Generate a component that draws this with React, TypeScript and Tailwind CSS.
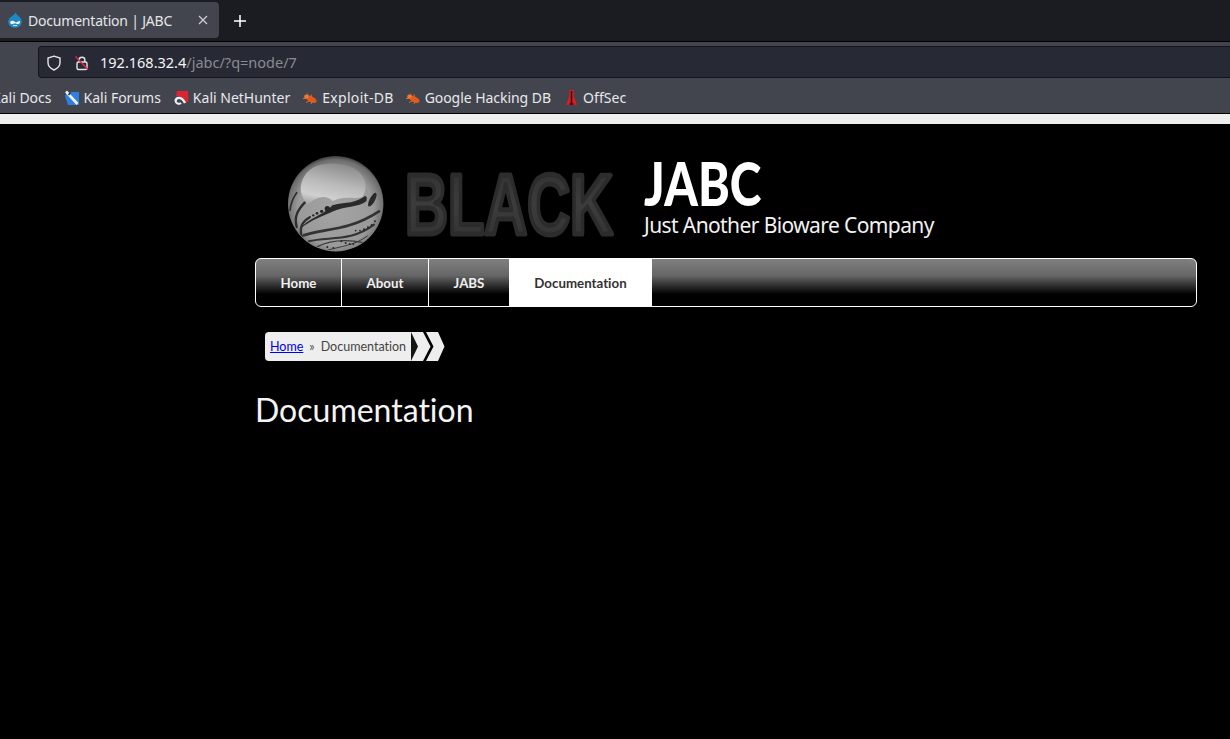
import React from "react";

const ui = { fontFamily: '"Noto Sans", "Open Sans", sans-serif' };
const page = { fontFamily: 'Lato, "Open Sans", sans-serif', fontVariantLigatures: "none" } as React.CSSProperties;
const head = { fontFamily: '"Noto Sans", "Open Sans", sans-serif' };
const jabc = { fontFamily: 'Lato, "Open Sans", sans-serif' };

function Drupal() {
  return (
    <svg width="16" height="16" viewBox="0 0 16 16">
      <path d="M8.5 0.3C9 3 14.8 5 14.8 9.7C14.8 13.2 11.6 15.7 8 15.7C4.4 15.7 1.2 13.2 1.2 9.7C1.2 5 7.5 3.5 8.5 0.3Z" fill="#1f87c4" />
      <path d="M3.3 9.6C5 8 7 9 8 10C9 11 11 9.6 12.7 8.8C13.6 10.5 12.6 12.2 11 12.2C9.6 12.2 9 11.2 8 11.2C7 11.2 6.2 12.2 4.7 12.2C3.4 12.2 2.9 10.6 3.3 9.6Z" fill="#f0f6fa" />
      <path d="M6 13.6H10" stroke="#dfeaf2" strokeWidth="1" />
    </svg>
  );
}

function Bug() {
  return (
    <svg width="16" height="16" viewBox="0 0 16 16">
      <ellipse cx="9.5" cy="9.5" rx="5.5" ry="2.8" fill="#e2591f" transform="rotate(24 9.5 9.5)" />
      <circle cx="4.4" cy="6.6" r="2.2" fill="#ee7b32" />
      <path d="M1 8.5L5 8.5M4 12.5L8 10.5M9 14L10 11M5 3.5L8 7M9 4.5L10 7.5" stroke="#e2691f" strokeWidth="1" fill="none" />
    </svg>
  );
}

function Bookmark({ icon, label, cls = "" }: { icon?: React.ReactNode; label: string; cls?: string }) {
  return (
    <div className="flex items-center gap-[4px] shrink-0">
      {icon}
      <span className={`text-[14px] text-[#e8e8ea] whitespace-nowrap leading-none ${cls}`}>{label}</span>
    </div>
  );
}

function Logo() {
  return (
    <svg width="336" height="100" viewBox="0 0 336 100" className="block">
      <defs>
        <radialGradient id="orb" cx="0.5" cy="0.55" r="0.55">
          <stop offset="0" stopColor="#a4a4a4" />
          <stop offset="0.72" stopColor="#9a9a9a" />
          <stop offset="0.93" stopColor="#6c6c6c" />
          <stop offset="1" stopColor="#3c3c3c" />
        </radialGradient>
        <linearGradient id="shine" x1="0.6" y1="0" x2="0.25" y2="1">
          <stop offset="0" stopColor="#8c8c8c" />
          <stop offset="0.45" stopColor="#b8b8b8" />
          <stop offset="0.8" stopColor="#d0d0d0" />
          <stop offset="1" stopColor="#a8a8a8" />
        </linearGradient>
        <linearGradient id="blk" x1="0" y1="0" x2="0" y2="1">
          <stop offset="0" stopColor="#2e2e2e" />
          <stop offset="0.5" stopColor="#3c3c3c" />
          <stop offset="1" stopColor="#303030" />
        </linearGradient>
        <clipPath id="orbClip">
          <circle cx="47.7" cy="48.7" r="47" />
        </clipPath>
      </defs>
      <circle cx="47.7" cy="48.7" r="47.7" fill="url(#orb)" />
      <g clipPath="url(#orbClip)">
        <g transform="translate(-4 -3) scale(0.3333)" fill="none" strokeLinecap="round">
          <path d="M50 105C55 65 85 38 125 36C175 32 225 45 240 80C248 100 245 122 234 136C205 142 175 130 146 148C128 128 98 132 72 158C58 145 50 128 50 105Z" fill="url(#shine)" />
          <path d="M145 160C170 150 205 158 240 134C248 128 250 140 247 148C225 166 178 164 148 178C118 192 80 204 50 230C66 202 122 188 145 160Z" fill="#2a2a2a" />
          <ellipse cx="265" cy="143" rx="8" ry="23" fill="#2a2a2a" transform="rotate(28 265 143)" />
          <path d="M38 122C25 140 20 155 18 175" stroke="#2e2e2e" strokeWidth="5" />
          <path d="M62 152C40 175 30 195 38 225" stroke="#2e2e2e" strokeWidth="7" />
          <path d="M75 197C50 212 45 235 56 262" stroke="#303030" strokeWidth="7" />
          <path d="M60 250C120 228 190 240 285 178" stroke="#333" strokeWidth="8" />
          <path d="M74 268C130 252 200 272 270 218" stroke="#333" strokeWidth="6" />
          <path d="M100 284C140 264 190 262 238 272" stroke="#3a3a3a" strokeWidth="4" />
          <path d="M130 295C170 282 210 282 250 252" stroke="#3a3a3a" strokeWidth="3" />
          <g fill="#262626">
            <circle cx="130" cy="170" r="8" /><circle cx="113" cy="178" r="5" /><circle cx="99" cy="184" r="4" /><circle cx="88" cy="190" r="3.5" /><circle cx="78" cy="195" r="3" />
            <circle cx="215" cy="236" r="2.5" /><circle cx="228" cy="236" r="2.5" /><circle cx="240" cy="232" r="3" /><circle cx="252" cy="226" r="3" /><circle cx="263" cy="219" r="3" /><circle cx="273" cy="208" r="3" />
            <circle cx="172" cy="268" r="3" /><circle cx="185" cy="273" r="3" /><circle cx="197" cy="276" r="3" /><circle cx="208" cy="276" r="3" />
            <circle cx="130" cy="285" r="3" /><circle cx="148" cy="288" r="3" />
          </g>
        </g>
      </g>
      <text x="117" y="78.5" textLength="208" lengthAdjust="spacingAndGlyphs" fontFamily='"Liberation Sans", sans-serif' fontWeight="700" fontSize="85" fill="url(#blk)" stroke="#2c2c2c" strokeWidth="5" strokeLinejoin="round">BLACK</text>
    </svg>
  );
}

function Tab({ label, active, last }: { label: string; active?: boolean; last?: boolean }) {
  const widths: Record<string, string> = { Home: "w-[86px]", About: "w-[87px]", JABS: "w-[80px]", Documentation: "w-[143px]" };
  return (
    <div
      className={`${widths[label]} h-full flex items-center justify-center pt-[2px] text-[13.3px] font-bold ${active ? "bg-white text-[#333333]" : "text-[#f0f0f0]"} ${last ? "" : "border-r border-white"}`}
    >
      {label}
    </div>
  );
}

export default function App() {
  return (
    <div className="w-[1230px] h-[739px] overflow-hidden bg-black flex flex-col" style={ui}>
      {/* Tab strip */}
      <div className="h-[42px] bg-[#1a1c21] border-b border-black flex items-start shrink-0">
        <div className="w-[219px] h-[36px] mt-[2px] bg-[#42454e] rounded-r-[4px] flex items-center pl-[7px] pr-[11px]">
          <Drupal />
          <span className="ml-[5px] text-[14px] text-[#e4e5e8] whitespace-nowrap tracking-[-0.2px]">Documentation | JABC</span>
          <span className="ml-auto text-[#d0d0d4]">
            <svg width="10" height="10" viewBox="0 0 10 10"><path d="M1 1L9 9M9 1L1 9" stroke="currentColor" strokeWidth="1.2" /></svg>
          </span>
        </div>
        <span className="ml-[15px] mt-[15px] text-white">
          <svg width="12" height="12" viewBox="0 0 12 12" className="block"><path d="M6 0V12M0 6H12" stroke="currentColor" strokeWidth="1.5" /></svg>
        </span>
      </div>
      {/* URL toolbar */}
      <div className="h-[36px] bg-[#42454e] flex items-end pl-[38px] shrink-0">
        <div className="w-full h-[32px] bg-[#272934] border border-[#14151a] border-r-0 rounded-l-[4px] flex items-center pl-[7px] pt-[1px]">
          <svg width="16" height="16" viewBox="0 0 16 16" fill="none"><path d="M8 1.2L14 3V7.5C14 11 11.5 13.5 8 15C4.5 13.5 2 11 2 7.5V3L8 1.2Z" stroke="#e4e5e8" strokeWidth="1.4" /></svg>
          <svg width="16" height="16" viewBox="0 0 16 16" fill="none" className="ml-[12px]">
            <rect x="3" y="7" width="10" height="7.5" rx="1.5" stroke="#e4e5e8" strokeWidth="1.4" />
            <path d="M5.2 7V4.5C5.2 1.5 10.8 1.5 10.8 4.5V7" stroke="#e4e5e8" strokeWidth="1.4" />
            <path d="M1.5 1.5L14 14.5" stroke="#e22850" strokeWidth="1.5" />
          </svg>
          <span className="ml-[10px] text-[14.5px] whitespace-nowrap">
            <span className="text-[#f4f4f6]">192.168.32.4</span>
            <span className="text-[#8a8c93]">/jabc/?q=node/7</span>
          </span>
        </div>
      </div>
      {/* Bookmarks */}
      <div className="h-[36px] bg-[#42454e] border-b border-black flex items-center pt-[4px] shrink-0 overflow-hidden">
        <div className="flex items-center ml-[-8px]">
          <Bookmark label="Kali Docs" />
          <div className="ml-[12px]">
            <Bookmark
              label="Kali Forums"
              icon={
                <svg width="16" height="16" viewBox="0 0 16 16">
                  <path d="M3 2H15V15H4L1 6Z" fill="#2e7fe0" />
                  <path d="M2 1.5L13.5 14" stroke="#f0f0f0" strokeWidth="2.6" />
                  <path d="M6.5 2.5L4.5 5" stroke="#1c1c22" strokeWidth="1.3" />
                </svg>
              }
            />
          </div>
          <div className="ml-[12px]">
            <Bookmark
              label="Kali NetHunter"
              icon={
                <svg width="16" height="16" viewBox="0 0 16 16" fill="none">
                  <path d="M4 1H15L15.5 11L12.5 13C11 8 7 5.5 3 6.5Z" fill="#dc2530" />
                  <path d="M2.5 11C3 6.5 9 6.5 12 13" stroke="#f2f2f2" strokeWidth="2.4" />
                  <path d="M2.5 11C3 14 6.5 14.5 8 13" stroke="#f2f2f2" strokeWidth="2" />
                </svg>
              }
            />
          </div>
          <div className="ml-[12px]"><Bookmark label="Exploit-DB" cls="tracking-[0.3px]" icon={<Bug />} /></div>
          <div className="ml-[11px]"><Bookmark label="Google Hacking DB" cls="tracking-[-0.05px]" icon={<Bug />} /></div>
          <div className="ml-[13px]">
            <Bookmark
              label="OffSec"
              cls="tracking-[0.1px]"
              icon={
                <svg width="15" height="18" viewBox="0 0 15 18">
                  <path d="M5.5 1H9.5L10 8L13 16H2L5 8Z" fill="#d81e25" />
                  <path d="M7.5 2V14M5.5 15H9.5" stroke="#3a0a0a" strokeWidth="1.6" />
                </svg>
              }
            />
          </div>
        </div>
      </div>
      {/* Light strip */}
      <div className="h-[10px] bg-[#eeeeee] shrink-0" />
      {/* Page */}
      <div className="flex-1 bg-black pl-[255px] pr-[33px]" style={page}>
        <div className="h-[134px] flex items-start">
          <div className="pl-[33px] pt-[31px] shrink-0"><Logo /></div>
          <div className="ml-[20px] pt-[29px] text-white" style={head}>
            <div className="origin-left scale-x-[0.8] text-[60px] font-black leading-[60px]" style={jabc}>JABC</div>
            <div className="text-[21px] leading-[24px] tracking-[-0.6px] text-[#f2f2f2] whitespace-nowrap">Just Another Bioware Company</div>
          </div>
        </div>
        <div className="h-[49px] border border-white rounded-[6px] overflow-hidden flex bg-[linear-gradient(to_bottom,#808080_0%,#666666_35%,#000000_75%,#000000_100%)]">
          <Tab label="Home" />
          <Tab label="About" />
          <Tab label="JABS" last />
          <Tab label="Documentation" active last />
        </div>
        <div className="ml-[10px] mt-[25px] flex items-center h-[29px]">
          <div className="h-full w-[146px] bg-[#eeeeee] rounded-l-[4px] flex items-center pl-[5px] pt-[1px] text-[12.5px] whitespace-nowrap text-[#444444]">
            <span className="text-[#0000ee] underline">Home</span>
            <span className="ml-[6px] text-[#555]">»</span>
            <span className="ml-[6px]">Documentation</span>
          </div>
          <svg width="34" height="29" viewBox="0 0 34 29" className="block">
            <path d="M0 0H12L19.5 14.5L12 29H0Z" fill="#eeeeee" />
            <path d="M0 0L7 14.5L0 29Z" fill="#141414" />
            <path d="M15 0H27L33.5 14.5L27 29H15L22.5 14.5Z" fill="#eeeeee" />
          </svg>
        </div>
        <h1 className="mt-[27px] text-[32px] font-normal leading-[44px] text-[#f4f4f4]">Documentation</h1>
      </div>
    </div>
  );
}
